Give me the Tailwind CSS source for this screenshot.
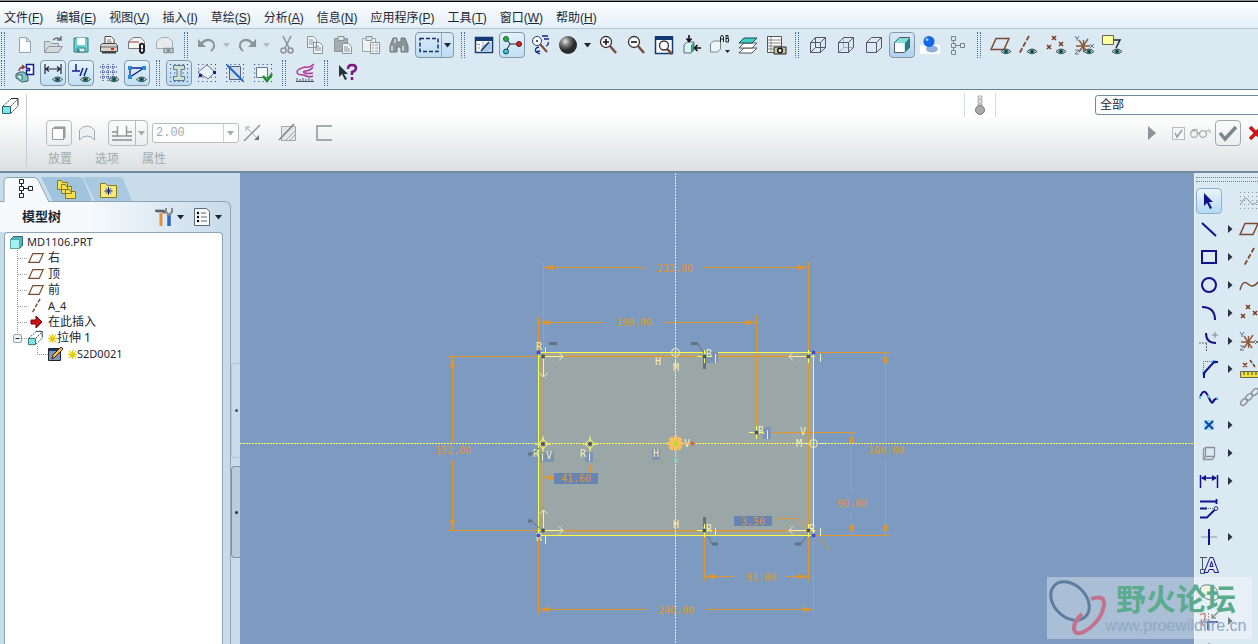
<!DOCTYPE html>
<html lang="zh-CN">
<head>
    <meta charset="UTF-8">
    <meta name="viewport" content="width=device-width, initial-scale=1.0">
    <title>MD1106.PRT</title>
    <script src="https://cdn.jsdelivr.net/npm/@tailwindcss/browser@4"></script>
</head>
<body class="flex h-screen flex-col overflow-hidden bg-[#dbe9f3] font-['Liberation_Sans','Noto_Sans_CJK_SC',sans-serif] text-xs text-[#1c2733]">
    <!-- Shared icons -->
    <svg class="hidden" fill="none">
        <symbol id="eye" viewBox="0 0 10 7"><path d="M0 3.5Q5-1.5 10 3.5Q5 8 0 3.5z" fill="#e8f0f0" stroke="#223" stroke-width=".8"/><circle cx="5" cy="3.5" r="2.6" fill="#2c7468"/><circle cx="5" cy="3.5" r="1" fill="#123"/></symbol>
        <symbol id="plane" viewBox="0 0 20 20"><path d="M6 4.5h13l-5 11H1z" fill="none" stroke="#7a4a32" stroke-width="1.5"/></symbol>
        <symbol id="axis" viewBox="0 0 20 20"><path d="M15 1L5 19" stroke="#7a4a32" stroke-width="1.8" stroke-dasharray="5 2"/></symbol>
        <symbol id="points" viewBox="0 0 20 20"><path d="M7 2l4 4m0-4L7 6M2 11l4 4m0-4l-4 4M14 8l4 4m0-4l-4 4" stroke="#7a3a22" stroke-width="1.5"/></symbol>
        <symbol id="csys" viewBox="0 0 20 20"><path d="M2 11h14M5 17l9-13M5 5l8 12M9.5 5v12" stroke="#8a5a3a" stroke-width="1.4"/><path d="M1 1l2 3 2-3M3 4v2M1 15h4l-4 4h4M16 9l4 4m0-4l-4 4" fill="none" stroke="#667788"/></symbol>
        <symbol id="tree" viewBox="0 0 16 20"><path d="M1.5 1.5h4v4h-4zM1.5 8.5h4v4h-4zM1.5 15.5h4v4h-4zM10.5 8.5h4v4h-4zM3.5 5.500V8M3.5 12v3M5.500 10.500h5" fill="none" stroke="currentColor"/></symbol>
        <symbol id="extrude" viewBox="0 0 18 18"><path d="M.5 9.500h8v7h-8z" fill="#7fe6e6" stroke="#2b6670"/><path d="M9 1.500h7v7" fill="none" stroke="#223"/><path d="M1 9l8-7M9 9l7-7M9 16l7-7" fill="none" stroke="#345" stroke-dasharray="2 1"/></symbol>
        <symbol id="caret" viewBox="0 0 8 5"><path d="M0 0h7L3.500 4.500z" fill="currentColor"/></symbol>
        <symbol id="flyout" viewBox="0 0 5 8"><path d="M0 0v8l4.500-4z" fill="#26323e"/></symbol>
        <symbol id="dots" viewBox="0 0 18 18"><path d="M1 1.500h17M1 5.500h17M1 9.500h17M1 13.500h17M1 17.500h17" fill="none" stroke="#1d3f9a" stroke-dasharray="1 3"/></symbol>
        <symbol id="star" viewBox="0 0 8 8"><path d="M4 0v8M0 4h8M1 1l6 6M7 1L1 7" stroke="#e0cc10" stroke-width="1.2"/></symbol>
    </svg>

    <!-- Menu bar -->
    <nav class="h-[29px] shrink-0 border-b border-[#b4c8d6] bg-gradient-to-b from-white to-[#e3eff7]">
        <div class="h-[2px] border-b border-black bg-[#8c969e]"></div>
        <div class="flex gap-[13px] pt-2 pl-1 leading-4 whitespace-nowrap">
            <a href="#">文件(<u>F</u>)</a>
            <a href="#">编辑(<u>E</u>)</a>
            <a href="#">视图(<u>V</u>)</a>
            <a href="#">插入(<u>I</u>)</a>
            <a href="#">草绘(<u>S</u>)</a>
            <a href="#">分析(<u>A</u>)</a>
            <a href="#">信息(<u>N</u>)</a>
            <a href="#">应用程序(<u>P</u>)</a>
            <a href="#">工具(<u>T</u>)</a>
            <a href="#">窗口(<u>W</u>)</a>
            <a href="#">帮助(<u>H</u>)</a>
        </div>
    </nav>

    <!-- Toolbars -->
    <div class="flex h-[61px] shrink-0 flex-col border-b border-[#6c8396] py-[2px] [&_button]:flex [&_button]:shrink-0 [&_button]:items-center [&_button]:justify-center [&_i]:mx-[5px] [&_i]:h-[26px] [&_i]:w-1 [&_i]:shrink-0 [&_i]:border-x [&_i]:border-dotted [&_i]:border-[#3f6a90] [&_svg]:overflow-visible">
        <div class="flex h-7 items-center pl-[11px] [&>button]:mx-px [&>button]:h-[26px] [&>button]:w-[26px]">
            <i class="-ml-[10px]! mr-[6px]!"></i>
            <button aria-label="新建"><svg class="size-5" viewBox="0 0 20 20"><path d="M4.500 2.500h7l4 4v11h-11zM11.500 2.500v4h4" fill="#fafcfd" stroke="#9aa3aa"/></svg></button>
            <button aria-label="打开"><svg class="size-5" viewBox="0 0 20 20"><path d="M1.500 17.500v-11h5l2 2h7v3M1.500 17.500l4-6h14l-4 6z" fill="#d4d9dc" stroke="#8f989e"/><path d="M10 5q4-4 8 0m0-4v4h-4" fill="none" stroke="#6a7378" stroke-width="1.5"/></svg></button>
            <button aria-label="保存"><svg class="size-5" viewBox="0 0 20 20"><path d="M3 3h14v14H3z" fill="#6cd0d0" stroke="#2a7f86"/><path d="M6 3h8v7H6z" fill="#fff"/><path d="M6 13h8v4H6z" fill="#d9eeee" stroke="#2a7f86"/><path d="M7.500 14v3" stroke="#2a7f86" stroke-width="2"/></svg></button>
            <button aria-label="打印"><svg class="size-5" viewBox="0 0 20 20"><path d="M6 9V1.500h6l3 3V9z" fill="#fff" stroke="#444"/><path d="M8 5h4M8 7h5" stroke="#777"/><path d="M1.500 10.500l2-2h13l2 2v6h-17z" fill="#d9d2c8" stroke="#444"/><path d="M2 12h16" stroke="#666"/><path d="M12 13h3v2h-3z" fill="#d22"/><path d="M3 17.500h14" stroke="#444" stroke-width="2"/></svg></button>
            <button aria-label="附加发送"><svg class="size-5" viewBox="0 0 20 20"><path d="M1.500 13.500v-7l5-4h7l4 4v7z" fill="#f4f4f0" stroke="#777"/><path d="M2 7h10" stroke="#a33"/><path d="M13 9.500q3-2 4 1v6q-2 3-4 0v-6z" fill="none" stroke="#111" stroke-width="1.8"/></svg></button>
            <button aria-label="链接发送"><svg class="size-5" viewBox="0 0 20 20"><path d="M1.500 13.500v-7l5-4h7l4 4v7z" fill="#e6eaec" stroke="#a5adb3"/><path d="M9 13.500h4v4H9zM14 13.500h4v4h-4zM11 15.500h5" fill="none" stroke="#8b949b" stroke-width="1.5"/></svg></button>
            <i></i>
            <button aria-label="撤消"><svg class="size-5" viewBox="0 0 20 20"><path d="M4 9q6-7 12-2 3 5-2 9" fill="none" stroke="#8b949b" stroke-width="2"/><path d="M1 4v8h8z" fill="#8b949b"/></svg></button>
            <svg class="mx-[2px] h-[5px] w-2 text-[#b4bdc5]"><use href="#caret"/></svg>
            <button aria-label="重做"><svg class="size-5" viewBox="0 0 20 20"><path d="M16 9q-6-7-12-2-3 5 2 9" fill="none" stroke="#8b949b" stroke-width="2"/><path d="M19 4v8h-8z" fill="#8b949b"/></svg></button>
            <svg class="mx-[2px] h-[5px] w-2 text-[#b4bdc5]"><use href="#caret"/></svg>
            <button aria-label="剪切"><svg class="size-5" viewBox="0 0 20 20"><path d="M6 1l6 12M14 1L8 13" stroke="#8b949b" stroke-width="1.6"/><circle cx="6.500" cy="15.500" r="2.500" fill="none" stroke="#8b949b" stroke-width="1.5"/><circle cx="13.500" cy="15.500" r="2.500" fill="none" stroke="#8b949b" stroke-width="1.5"/></svg></button>
            <button aria-label="复制"><svg class="size-5" viewBox="0 0 20 20"><path d="M2.500 1.500h6l3 3v8h-9zM8.500 7.500h6l3 3v8h-9z" fill="#f1f4f6" stroke="#8b949b"/><path d="M4 5h4M4 7h5M4 9h4M10 11h4M10 13h6M10 15h6" stroke="#8b949b"/></svg></button>
            <button aria-label="粘贴"><svg class="size-5" viewBox="0 0 20 20"><path d="M1.500 3.500h13v13h-13z" fill="#a5adb3" stroke="#8b949b"/><path d="M5 1.500h6v4H5z" fill="#dde2e5" stroke="#8b949b"/><path d="M9.500 8.500h6l3 3v7h-9z" fill="#f4f6f7" stroke="#8b949b"/><path d="M11 12h4M11 14h6M11 16h6" stroke="#8b949b"/></svg></button>
            <button aria-label="选择性粘贴"><svg class="size-5" viewBox="0 0 20 20"><path d="M1.500 3.500h13v13h-13z" fill="#eef1f3" stroke="#9aa3aa"/><path d="M5 1.500h6v4H5z" fill="#dde2e5" stroke="#8b949b"/><path d="M9.500 7.500h9v11h-9z" fill="#f4f6f7" stroke="#8b949b"/><path d="M11 10h2M11 13h2M11 16h2M14 10h3M14 13h3M14 16h3" stroke="#8b949b"/></svg></button>
            <button aria-label="查找"><svg class="size-5" viewBox="0 0 20 20"><path d="M4 3h4v4h4V3h4l3 8v6h-7v-5H8v5H1v-6z" fill="#8b949b" stroke="#6f787f"/><path d="M3 11v5M14 11v5M6 4v4" stroke="#dde2e5" stroke-width="1.5"/></svg></button>
            <div class="mx-[2px] flex h-[26px] rounded-sm border border-[#8398a8] bg-gradient-to-b from-[#dcecf7] to-[#bddcf2]">
                <button aria-label="选取框" class="w-[25px]"><svg class="h-4 w-5" viewBox="0 0 20 16"><path d="M1 1.500h18v13H1z" fill="none" stroke="#1a2b6a" stroke-width="1.5" stroke-dasharray="4 2"/></svg></button>
                <button aria-label="选取方式" class="w-3 border-l border-[#8fa8ba]"><svg class="h-[5px] w-2"><use href="#caret"/></svg></button>
            </div>
            <i></i>
            <button aria-label="重画"><svg class="size-5" viewBox="0 0 20 20"><path d="M1.500 2.500h17v15h-17z" fill="#fff" stroke="#123a72" stroke-width="1.5"/><path d="M1 2h18v4H1z" fill="#123a72"/><path d="M7 15l1-5 9-3v8l-6 2z" fill="#a9c8ea"/><path d="M7 16l8-9" stroke="#235" stroke-width="1.5"/><path d="M3 9l3 1M4 13h2M8 8h2" stroke="#888"/></svg></button>
            <button aria-label="旋转中心" aria-pressed="true" class="rounded-sm border border-[#8398a8] bg-gradient-to-b from-[#e6f2fa] to-[#bfdff5]"><svg class="size-5" viewBox="0 0 20 20"><path d="M4 3l4 6-4 7M8 9h9" fill="none" stroke="#223"/><circle cx="4" cy="4" r="2.500" fill="#2fae3a" stroke="#164"/><circle cx="17" cy="9" r="2.500" fill="#d6202c" stroke="#611"/><circle cx="4" cy="16.500" r="2.500" fill="#3fc7d8" stroke="#145"/></svg></button>
            <button aria-label="定向模式"><svg class="size-5" viewBox="0 0 20 20"><circle cx="7" cy="6" r="4.500" fill="#fff" stroke="#246"/><circle cx="7" cy="6" r="1" fill="#124"/><path d="M10 9l7 8" stroke="#7a4a3a" stroke-width="2"/><path d="M12 1h6M14 4h5M18 7q1 3-2 4M9 12q-5 1-3 5l4 2M6 17l4-1" fill="none" stroke="#12218c" stroke-width="1.3"/></svg></button>
            <button aria-label="外观库"><svg class="size-5" viewBox="0 0 20 20"><defs><radialGradient id="ball" cx=".35" cy=".3"><stop stop-color="#e8e8e8"/><stop offset=".5" stop-color="#777"/><stop offset="1" stop-color="#2a2a2a"/></radialGradient></defs><circle cx="10" cy="10" r="9" fill="url(#ball)"/></svg></button>
            <svg class="mx-[2px] h-[5px] w-2"><use href="#caret"/></svg>
            <button aria-label="放大"><svg class="size-5" viewBox="0 0 20 20"><path d="M12 11l6 7" stroke="#7a4a3a" stroke-width="2.500"/><circle cx="8" cy="7" r="5.500" fill="#fff" stroke="#333" stroke-width="1.3"/><path d="M5 7h6M8 4v6" stroke="#111" stroke-width="1.6"/></svg></button>
            <button aria-label="缩小"><svg class="size-5" viewBox="0 0 20 20"><path d="M12 11l6 7" stroke="#7a4a3a" stroke-width="2.500"/><circle cx="8" cy="7" r="5.500" fill="#fff" stroke="#333" stroke-width="1.3"/><path d="M5 7h6" stroke="#111" stroke-width="1.6"/></svg></button>
            <button aria-label="重新调整"><svg class="size-5" viewBox="0 0 20 20"><path d="M1.500 2.500h17v16h-17z" fill="#fff" stroke="#123a72" stroke-width="1.5"/><path d="M1 1h18v4H1z" fill="#123a72"/><path d="M13 14l5 5" stroke="#7a4a3a" stroke-width="2.500"/><circle cx="10" cy="10.500" r="4.500" fill="#fff" stroke="#333" stroke-width="1.3"/></svg></button>
            <button aria-label="重定向"><svg class="size-5" viewBox="0 0 20 20"><path d="M2 10l3-3h7v8l-3 3H2z" fill="#d7f3f0" stroke="#667"/><path d="M9 10l3-3v8l-3 3z" fill="#2aa38f"/><path d="M7 0v6M4.500 3.500L7 6.500l2.500-3M19 13h-6m2.500-3L12.500 13l3 3" fill="none" stroke="#111" stroke-width="1.6"/></svg></button>
            <button aria-label="已保存的视图"><svg class="size-5" viewBox="0 0 20 20"><path d="M.5 9l3-3h7v8l-3 3h-7z" fill="#eef6f8" stroke="#788"/><path d="M10.500 7V2l1.500-2 1.500 2v5M10.500 4h3M16 0v7h2.500V3.500H16M16 .5h2V3" fill="none" stroke="#222"/><path d="M15 15h5l-2.500 3z" fill="#222"/></svg></button>
            <button aria-label="层"><svg class="size-5" viewBox="0 0 20 20"><path d="M1 18l5-5h13l-5 5z" fill="#fff" stroke="#555"/><path d="M1 13l5-5h13l-5 5z" fill="#fff" stroke="#555"/><path d="M1 8l5-5h13l-5 5z" fill="#3fd0c4" stroke="#245"/></svg></button>
            <button aria-label="视图管理器"><svg class="size-5" viewBox="0 0 20 20"><path d="M1.500 1.500h14v16h-14z" fill="#fff" stroke="#555"/><path d="M5 2v15M2 5h13M2 8h13M2 11h13M2 14h13" stroke="#888"/><path d="M8 12h12v7H8z" fill="#c9c4a0" stroke="#222"/><circle cx="14" cy="15.500" r="2.300" fill="#fff" stroke="#111" stroke-width="1.5"/></svg></button>
            <i></i>
            <button aria-label="线框"><svg class="size-5" viewBox="0 0 20 20"><path d="M2.500 7.500h10v10h-10zM7.500 2.500h10v10h-10zM2.500 7.500l5-5M12.500 7.500l5-5M12.500 17.500l5-5M2.500 17.500l5-5" fill="none" stroke="#556"/></svg></button>
            <button aria-label="隐藏线"><svg class="size-5" viewBox="0 0 20 20"><path d="M7.500 3v9.500h10M2.500 17.500l5-5" fill="none" stroke="#a6b0b8"/><path d="M2.500 7.500h10v10h-10zM2.500 7.500l5-5h10v10l-5 5M12.500 7.500l5-5" fill="none" stroke="#556"/></svg></button>
            <button aria-label="消隐"><svg class="size-5" viewBox="0 0 20 20"><path d="M2.500 7.500h10v10h-10zM2.500 7.500l5-5h10v10l-5 5M12.500 7.500l5-5" fill="none" stroke="#556"/></svg></button>
            <button aria-label="着色" aria-pressed="true" class="rounded-sm border border-[#8398a8] bg-gradient-to-b from-[#d8e9f6] to-[#b0d3ee]"><svg class="size-5" viewBox="0 0 20 20"><path d="M2.500 7.500l5-5h10v10l-5 5h-10z" fill="#7fe0da" stroke="#556"/><path d="M3 8h9.500v9H3z" fill="#fff"/><path d="M13 8l4.500-5v9.500l-4.500 5z" fill="#2b7f84"/></svg></button>
            <button aria-label="增强的真实感"><svg class="size-5" viewBox="0 0 20 20"><path d="M0 10h20v9H0z" fill="#fff"/><ellipse cx="12" cy="14" rx="6" ry="3.500" fill="#8fb2dc"/><circle cx="9" cy="6.500" r="5.500" fill="#1268e8"/><circle cx="7" cy="4.500" r="1.500" fill="#9cf"/></svg></button>
            <button aria-label="模型树"><svg class="h-5 w-4 text-[#7b858d]"><use href="#tree"/></svg></button>
            <i></i>
            <button aria-label="基准平面显示"><svg class="size-5" viewBox="0 0 20 20"><use href="#plane" y="-1" width="20" height="20"/><use href="#eye" x="11" y="13" width="10" height="7"/></svg></button>
            <button aria-label="基准轴显示"><svg class="size-5" viewBox="0 0 20 20"><use href="#axis" x="-4" width="20" height="20"/><use href="#eye" x="9" y="13" width="10" height="7"/></svg></button>
            <button aria-label="基准点显示"><svg class="size-5" viewBox="0 0 20 20"><use href="#points" x="-1" y="-1" width="20" height="20"/><use href="#eye" x="10" y="13" width="10" height="7"/></svg></button>
            <button aria-label="坐标系显示"><svg class="size-5" viewBox="0 0 20 20"><use href="#csys" width="20" height="20"/><use href="#eye" x="10" y="13" width="10" height="7"/></svg></button>
            <button aria-label="注释显示"><svg class="size-5" viewBox="0 0 20 20"><path d="M.5.5h11v9H.5z" fill="#ffffa0" stroke="#665"/><path d="M12 5h6l-4 8" fill="none" stroke="#222" stroke-width="1.5"/><use href="#eye" x="10" y="13" width="10" height="7"/></svg></button>
        </div>
        <div class="flex h-7 items-center pl-[11px] [&>button]:mx-px [&>button]:h-[26px] [&>button]:w-[26px]">
            <i class="-ml-[10px]! mr-[6px]!"></i>
            <button aria-label="草绘方向"><svg class="size-5" viewBox="0 0 20 20"><path d="M1 11l4-2h4l4 4v5l-6 1-6-4z" fill="#7cc9c2" stroke="#456"/><path d="M2 12h5v5" fill="#eafaf8" stroke="#456"/><path d="M11.500 1.500h7v10h-7v-4h3v-2h-3z" fill="#fff" stroke="#12218c" stroke-width="1.5"/><path d="M4 8q0-4 5-4M7 2l2.500 2L7 6" fill="none" stroke="#833" stroke-width="1.3"/></svg></button>
            <button aria-label="尺寸显示" aria-pressed="true" class="rounded-sm border border-[#8398a8] bg-gradient-to-b from-[#e6f2fa] to-[#bfdff5]"><svg class="size-5" viewBox="0 0 20 20"><path d="M2 1v10M18 1v10M3 6h14M6 3.500L3 6l3 2.500M14 3.500L17 6l-3 2.500" fill="none" stroke="#223" stroke-width="1.2"/><use href="#eye" x="9" y="13" width="11" height="7"/></svg></button>
            <button aria-label="约束显示" aria-pressed="true" class="rounded-sm border border-[#8398a8] bg-gradient-to-b from-[#e6f2fa] to-[#bfdff5]"><svg class="size-5" viewBox="0 0 20 20"><path d="M1 8h8M5 1v7M9 13l3-8M13 13l3-8" stroke="#12218c" stroke-width="1.5"/><use href="#eye" x="9" y="13" width="11" height="7"/></svg></button>
            <button aria-label="网格显示"><svg class="size-5" viewBox="0 0 20 20"><path d="M4 1v17M9 1v17M14 1v17M1 4h17M1 9h17M1 14h17" stroke="#12218c" stroke-dasharray="1 1"/><use href="#eye" x="10" y="13" width="10" height="7"/></svg></button>
            <button aria-label="顶点显示" aria-pressed="true" class="rounded-sm border border-[#8398a8] bg-gradient-to-b from-[#e6f2fa] to-[#bfdff5]"><svg class="size-5" viewBox="0 0 20 20"><path d="M3 5h14L3 14z" fill="none" stroke="#12218c" stroke-width="1.3"/><path d="M1 3h4v4H1zM15 3h4v4h-4zM1 12h4v4H1z" fill="#2a8ad8"/><use href="#eye" x="9" y="13" width="11" height="7"/></svg></button>
            <i></i>
            <button aria-label="着色封闭环" aria-pressed="true" class="rounded-sm border border-[#8398a8] bg-gradient-to-b from-[#d8e9f6] to-[#b9dbf3]"><svg class="size-5" viewBox="0 0 20 20"><use href="#dots" width="19" height="19"/><path d="M4.500 2.500h11v4h-3.500v7h3.500v4h-11v-4h3.500v-7h-3.500z" fill="#cfe0d4" stroke="#678"/></svg></button>
            <button aria-label="加亮开放端"><svg class="size-5" viewBox="0 0 20 20"><use href="#dots" width="19" height="19"/><path d="M1 9l9-7 8 7-7 7z" fill="#e8f1f8" stroke="#778"/><path d="M2 11h3v3H2zM16 8h3v3h-3z" fill="#12218c"/></svg></button>
            <button aria-label="重叠几何"><svg class="size-5" viewBox="0 0 20 20"><use href="#dots" width="19" height="19"/><path d="M4.500 3.500h11v13h-11z" fill="#cfdce8" stroke="#567"/><path d="M2 2l16 16" stroke="#1866d0" stroke-width="2"/></svg></button>
            <button aria-label="特征要求"><svg class="size-5" viewBox="0 0 20 20"><use href="#dots" width="19" height="19"/><path d="M3.500 4.500h11v10h-11z" fill="#f4fbfa" stroke="#678"/><path d="M10 13l4 5 5-7" fill="none" stroke="#189028" stroke-width="2.500"/></svg></button>
            <i></i>
            <button aria-label="分析"><svg class="size-5" viewBox="0 0 20 20"><path d="M19 1q-4 4-9 3-8 2-8 5t7 3q5 3 9 1M18 4q-3 4-8 4-3 1 0 2t8 0" fill="none" stroke="#b03a9a" stroke-width="1.5"/><path d="M1 18.500h18M2 15v3M5 16v2M8 15v3M11 16v2M14 15v3M17 16v2" stroke="#556"/></svg></button>
            <i></i>
            <button aria-label="上下文帮助"><svg class="size-5" viewBox="0 0 20 20"><path d="M2 2v12l3-3 3 6 2-1-3-5h4z" fill="#26323e"/><path d="M11 6q0-4 4-4t4 3-4 4v3M15 14v3" fill="none" stroke="#7a1a80" stroke-width="2.500"/></svg></button>
        </div>
    </div>

    <!-- Feature dashboard -->
    <section class="flex h-[83px] shrink-0 overflow-hidden border-b-2 border-[#6f8ba0] bg-gradient-to-b from-white from-30% to-[#dce0e2] text-[#a2a9ae]">
        <div class="my-1 w-[27px] shrink-0 border-r border-[#c3ced6] pt-[3px] pl-[2px]">
            <svg class="size-[18px]"><use href="#extrude"/></svg>
        </div>
        <div class="flex min-w-0 flex-1 flex-col">
            <div class="flex h-[30px] items-center justify-end">
                <div class="mr-[99px] flex h-6 w-8 items-center justify-center border-x border-[#d5dadd]">
                    <svg class="h-5 w-3" viewBox="0 0 12 20"><path d="M4 1h4v3H4zM4 5h4v3H4zM4 9h4v3H4z" fill="#eee" stroke="#999" stroke-width=".8"/><circle cx="6" cy="15" r="4.500" fill="#aaa" stroke="#777"/></svg>
                </div>
                <select aria-label="过滤器" class="-mr-1 h-5 w-[167px] appearance-none rounded-[3px] border border-[#6f8ba0] bg-white px-1 text-xs leading-4 text-[#1c2733]"><option>全部</option></select>
            </div>
            <div class="flex h-[26px] items-center pl-[19px] [&_button]:flex [&_button]:shrink-0 [&_button]:items-center [&_button]:justify-center">
                <button aria-label="实体" class="size-[26px] rounded-sm border border-[#b6bcc0]"><svg class="size-5" viewBox="0 0 20 20"><path d="M3.500 5.500l2-2h11v11l-2 2h-11z" fill="#999"/><path d="M3.500 5.500h11v11h-11z" fill="#fff" stroke="#999"/></svg></button>
                <button aria-label="曲面" class="ml-[2px] size-[26px]"><svg class="size-5" viewBox="0 0 20 20"><path d="M2.500 17V7q3-4 7.500-4t7.500 4v10q-3-4-7.500-4t-7.500 4z" fill="#eef0f1" stroke="#a2a9ae"/></svg></button>
                <div class="ml-2 flex h-[26px] rounded-sm border border-[#b6bcc0]">
                    <button aria-label="深度选项" class="w-[26px]"><svg class="size-5" viewBox="0 0 20 20"><path d="M0 9h5M15 9h5M0 13h5M15 13h5M0 17h20" stroke="#888f94" stroke-width="1.5"/><path d="M5.500 3v10h9V3" fill="#fff" stroke="#999" stroke-width="1.5"/></svg></button>
                    <button aria-label="更多深度选项" class="w-3 border-l border-[#b6bcc0]"><svg class="h-[5px] w-2"><use href="#caret"/></svg></button>
                </div>
                <div class="ml-1 flex h-5 w-[87px] rounded-[3px] border border-[#b6bcc0] bg-white">
                    <input aria-label="深度值" value="2.00" class="w-[70px] pl-[3px] font-['Liberation_Mono',monospace] text-xs text-[#a2a9ae]">
                    <button aria-label="最近的值" class="flex-1 border-l border-[#ccd1d4]"><svg class="h-[5px] w-2"><use href="#caret"/></svg></button>
                </div>
                <button aria-label="反向" class="ml-[2px] size-[22px]"><svg class="size-5" viewBox="0 0 20 20"><path d="M2 18L18 2" stroke="#8b949b" stroke-width="1.5"/><path d="M4 4l12 12M4 8V4h4" fill="none" stroke="#aaa"/><path d="M17 17v-5l-5 5z" fill="#777"/></svg></button>
                <button aria-label="移除材料" class="ml-[14px] size-[22px]"><svg class="size-5" viewBox="0 0 20 20"><path d="M3.500 3.500h14v14h-14z" fill="#e4e6e8" stroke="#a2a9ae"/><path d="M8 17l9-9M12 17l5-5" stroke="#a2a9ae"/><path d="M1 17L16 1" stroke="#7b8388" stroke-width="1.5"/></svg></button>
                <button aria-label="加厚" class="ml-[14px] size-[22px]"><svg class="size-5" viewBox="0 0 20 20"><path d="M18 3H3v14h15" fill="none" stroke="#8b949b" stroke-width="1.5"/></svg></button>
                <div class="ml-auto flex items-center">
                    <button aria-label="继续"><svg class="h-[14px] w-2" viewBox="0 0 8 14"><path d="M0 0v14l8-7z" fill="#8b949b"/></svg></button>
                    <label class="ml-4 grid size-[13px] [&>*]:[grid-area:1/1]">
                        <input type="checkbox" checked aria-label="预览" class="peer size-[13px] appearance-none border border-[#b6bcc0] bg-[#f4f5f5]">
                        <svg class="invisible size-[13px] peer-checked:visible" viewBox="0 0 13 13"><path d="M3 6l2 4 5-7" fill="none" stroke="#999" stroke-width="1.5"/></svg>
                    </label>
                    <svg class="ml-1 h-4 w-[22px]" viewBox="0 0 22 16"><circle cx="5" cy="9" r="3.500" fill="none" stroke="#999"/><circle cx="14" cy="9" r="3.500" fill="none" stroke="#999"/><path d="M8 8h3M2 7q2-4 7-2M17 7q4-5 4 1" fill="none" stroke="#999"/></svg>
                    <button aria-label="确定" class="ml-1 size-[26px] rounded-sm border border-[#a2a9ae]"><svg class="size-5" viewBox="0 0 20 20"><path d="M2 10l5 6L18 4" fill="none" stroke="#7f878c" stroke-width="3.500"/></svg></button>
                    <button aria-label="取消" class="-mr-[5px] ml-2"><svg class="h-[14px] w-[14px]" viewBox="0 0 14 14"><path d="M1 1l12 12M13 1L1 13" stroke="#c4161c" stroke-width="3.500"/></svg></button>
                </div>
            </div>
            <div class="flex gap-[23px] pt-[5px] pl-[21px] leading-4">
                <button>放置</button>
                <button>选项</button>
                <button>属性</button>
            </div>
        </div>
    </section>

    <main class="flex min-h-0 flex-1">
        <!-- Navigator -->
        <aside class="flex w-60 shrink-0 bg-[#c9dcea]">
            <div class="flex min-w-0 flex-1 flex-col">
                <div class="flex h-7 items-end pl-1">
                    <button aria-label="模型树" class="z-10 flex h-6 w-11 items-center justify-center"><svg class="h-6 w-12 shrink-0 overflow-visible" viewBox="0 0 48 24"><path d="M2 25V4Q2 .5 6 .5h26q3 0 5 4L47 25" fill="#f6fafd" stroke="#8fa5b5"/><svg x="16" y="1" width="16" height="20" class="text-[#222]"><use href="#tree"/></svg></svg></button>
                    <button aria-label="文件夹浏览器" class="flex h-6 w-[42px] items-center justify-center"><svg class="h-6 w-12 shrink-0 overflow-visible" viewBox="0 0 48 24"><path d="M-4 0h38q3 0 5 4l8 20H8z" fill="#a0c4de"/><path d="M12.500 3.500h4l1 2h5v7h-10zM16.500 7.500h4l1 2h5v7h-10zM20.500 12.500h4l1 2h5v7h-10z" fill="#f3df52" stroke="#8a7a1c"/></svg></button>
                    <button aria-label="收藏夹" class="flex h-6 w-[42px] items-center justify-center"><svg class="h-6 w-12 shrink-0 overflow-visible" viewBox="0 0 48 24"><path d="M-4 0h36q3 0 5 4l8 20H8z" fill="#a9c9e0"/><path d="M13.500 6.500h5l2 2h9v12h-16z" fill="#f7ea7a" stroke="#8a7a1c"/><path d="M21.500 10v8M17.500 14h8M19 11.500l5 5M24 11.500l-5 5" stroke="#12218c"/></svg></button>
                </div>
                <div class="flex min-h-0 flex-1 flex-col rounded-tr-md border-t border-r border-[#8fa5b5] pr-[7px] pl-1">
                    <div class="-ml-1 flex h-[30px] items-center bg-gradient-to-r from-[#f6fafd] from-40% to-transparent pl-[22px]">
                        <h2 class="mr-auto text-[13px] font-bold">模型树</h2>
                        <button aria-label="设置" class="flex items-center gap-1"><svg class="h-5 w-[18px]" viewBox="0 0 18 20"><path d="M0 3h9l2 3H8v-1H1z" fill="#666" stroke="#444" stroke-width=".5"/><path d="M6 6v13" stroke="#e09040" stroke-width="3"/><path d="M14 8v11" stroke="#2b66c0" stroke-width="3.500"/><path d="M11 1v4l3 3 3-3V1" fill="none" stroke="#888" stroke-width="2"/></svg><svg class="h-[5px] w-2"><use href="#caret"/></svg></button>
                        <button aria-label="显示" class="ml-2 flex items-center gap-1"><svg class="h-5 w-[18px]" viewBox="0 0 18 20"><path d="M1.500 1.500h12l3 3v14h-15z" fill="#f8fafb" stroke="#567"/><circle cx="5" cy="6" r="1.2"/><circle cx="5" cy="10" r="1.2"/><circle cx="5" cy="14" r="1.2"/><path d="M8 6h5M8 10h6M8 14h6" stroke="#567"/></svg><svg class="h-[5px] w-2"><use href="#caret"/></svg></button>
                    </div>
                    <!-- Model tree -->
                    <ul class="min-h-0 flex-1 rounded-t-sm border border-b-0 border-[#8fa5b5] bg-white pt-px pl-[5px] font-['Noto_Sans','Noto_Sans_CJK_SC',sans-serif] text-xs leading-4 [&_li]:flex [&_li]:h-4 [&_li]:items-center [&_li]:whitespace-nowrap [&_svg]:shrink-0">
                        <li class="text-[11px]"><svg class="mr-1 size-[13px]" viewBox="0 0 13 13"><path d="M.5 3.500l3-3h9v9l-3 3h-9z" fill="#4fb8bc" stroke="#356a78"/><path d="M.5 3.500h9v9h-9z" fill="#a5f0f0" stroke="#5aa"/></svg>MD1106.PRT</li>
                        <li><svg class="h-4 w-[18px]" viewBox="0 0 18 16"><path d="M7.500 0v16M8 8.500h10" stroke="#999" stroke-dasharray="1 1"/></svg><svg class="mr-1 size-4"><use href="#plane"/></svg>右</li>
                        <li><svg class="h-4 w-[18px]" viewBox="0 0 18 16"><path d="M7.500 0v16M8 8.500h10" stroke="#999" stroke-dasharray="1 1"/></svg><svg class="mr-1 size-4"><use href="#plane"/></svg>顶</li>
                        <li><svg class="h-4 w-[18px]" viewBox="0 0 18 16"><path d="M7.500 0v16M8 8.500h10" stroke="#999" stroke-dasharray="1 1"/></svg><svg class="mr-1 size-4"><use href="#plane"/></svg>前</li>
                        <li class="text-[11px]"><svg class="h-4 w-[18px]" viewBox="0 0 18 16"><path d="M7.500 0v16M8 8.500h10" stroke="#999" stroke-dasharray="1 1"/></svg><svg class="mr-1 size-4"><use href="#axis"/></svg>A_4</li>
                        <li><svg class="h-4 w-[18px]" viewBox="0 0 18 16"><path d="M7.500 0v16M8 8.500h10" stroke="#999" stroke-dasharray="1 1"/></svg><svg class="mr-1 size-4" viewBox="0 0 16 16"><path d="M3 6h5V2l6 6-6 6v-4H3z" fill="#d01018" stroke="#700"/></svg>在此插入</li>
                        <li><svg class="h-4 w-[18px]" viewBox="0 0 18 16"><path d="M7.500 0v4M12 8.500h6" stroke="#999" stroke-dasharray="1 1"/><rect x="3.500" y="4.500" width="8" height="8" rx="1.5" fill="#eef4f8" stroke="#8fa5b5"/><path d="M5.500 8.500h4" stroke="#223"/></svg><svg class="mr-1 size-4"><use href="#extrude"/></svg><svg class="size-[9px]"><use href="#star"/></svg>拉伸 1</li>
                        <li class="text-[11px]"><svg class="h-4 w-[38px]" viewBox="0 0 38 16"><path d="M27.500 0v8.500H38" fill="none" stroke="#999" stroke-dasharray="1 1"/></svg><svg class="mr-1 size-4" viewBox="0 0 16 16"><path d="M.5 2.500h12v12H.5z" fill="#7f95b8" stroke="#223"/><path d="M1 3h12v2H1z" fill="#123a72"/><path d="M4 13l1-4 8-8 2 2-8 8z" fill="#f2c94c" stroke="#420"/></svg><svg class="size-[9px]"><use href="#star"/></svg>S2D0021</li>
                    </ul>
                </div>
            </div>
            <div class="flex w-[9px] flex-col gap-2 pt-[190px]">
                <button aria-label="折叠浏览器" class="flex h-[95px] items-center justify-center rounded-l border border-r-0 border-[#b3c6d4]"><span class="size-[3px] rounded-full bg-[#456]"></span></button>
                <button aria-label="折叠导航器" class="flex h-[92px] items-center justify-center rounded-l border border-r-0 border-[#7f95a5] bg-[#b8ccda]"><span class="size-[3px] rounded-full bg-[#234]"></span></button>
            </div>
        </aside>

        <!-- Sketch -->
        <div class="relative min-w-0 flex-1 overflow-hidden bg-[#7d9bc0]">
            <svg class="absolute inset-0 size-full" viewBox="240 173 954 471" preserveAspectRatio="xMinYMin slice" fill="none">
                <defs>
                    <marker id="tip" viewBox="0 0 10 6" refX="10" refY="3" markerWidth="10" markerHeight="6" markerUnits="userSpaceOnUse" orient="auto"><path d="M0 .5L10 3L0 5.500z" fill="#e0962c"/></marker>
                    <symbol id="vertex" viewBox="0 0 16 16" overflow="visible"><path d="M8 0v16M0 8h16" stroke="#ffff5a"/><path d="M3 8l5-5 5 5-5 5z" stroke="#f0f080"/><circle cx="8" cy="8" r="2" fill="#4a5560"/></symbol>
                </defs>
                <rect x="538" y="352" width="276" height="184" fill="#9ba6a6"/>
                <!-- extension lines -->
                <g stroke="#e0962c" shape-rendering="crispEdges">
                    <path d="M543.500 262v268M808.500 262v319M538.500 317v35M756.500 315v117M448 356.500h360M448 530.500h360M813 352.500h77M813 535.500h77M770 432.500h86M704.500 530v51M538.500 535v79M813.500 535v79M590.500 465v12"/>
                    <path d="M543 355.500h265M543 531.500h265M542.500 356v174M809.500 356v174" stroke="#b8a46c"/>
                </g>
                <path d="M820 538l10 13M776 518.500h21l11 11" stroke="#e0962c"/>
                <!-- dimension lines -->
                <g stroke="#e0962c" shape-rendering="crispEdges" class="[&_path]:[marker-end:url(#tip)]">
                    <path d="M646 267.500H543"/>
                    <path d="M704 267.500H808"/>
                    <path d="M603 322.500H539"/>
                    <path d="M664 322.500H756"/>
                    <path d="M452.500 442V357"/>
                    <path d="M452.500 460V530"/>
                    <path d="M885.500 442V353"/>
                    <path d="M885.500 460V535"/>
                    <path d="M851.500 492V433"/>
                    <path d="M851.500 512V535"/>
                    <path d="M734 576.500H705"/>
                    <path d="M786 576.500H808"/>
                    <path d="M648 609.500H539"/>
                    <path d="M706 609.500H813"/>
                    <path d="M553 477.500H543"/>
                </g>
                <g shape-rendering="crispEdges">
                    <path d="M538.500 352.500h275v183h-275z" stroke="#ffff46"/>
                    <path d="M675.500 173v1000M240 443.500h2400" stroke="#ffff50" stroke-dasharray="2 1"/>
                </g>
                <path d="M554 473h44v11h-44zM734 516h38v10h-38z" fill="#6685b4"/>
                <path d="M652 449h8v11h-8zM585 452h8v10h-8zM540 452h14v10h-14zM706 352h12v11h-12zM763 427h8v12h-8z" fill="#7b93b4"/>
                <!-- dimension values -->
                <g fill="#e0962c" text-anchor="middle" class="font-['DejaVu_Sans_Mono',monospace] text-[10px]">
                    <text x="675" y="272">232.00</text>
                    <text x="634" y="326">190.00</text>
                    <text x="453" y="454">152.00</text>
                    <text x="886" y="454">160.00</text>
                    <text x="852" y="507">90.00</text>
                    <text x="761" y="581">91.00</text>
                    <text x="676" y="614">240.00</text>
                    <text x="576" y="482">41.60</text>
                    <text x="753" y="525">3.50</text>
                </g>
                <!-- constraint labels -->
                <g fill="#f4efb4" text-anchor="middle" class="font-['DejaVu_Sans_Mono',monospace] text-[10px]">
                    <text x="539" y="350">R</text>
                    <text x="658" y="365">H</text>
                    <text x="676" y="371">M</text>
                    <text x="709" y="357">R</text>
                    <text x="761" y="434">R</text>
                    <text x="803" y="435">V</text>
                    <text x="799" y="447">M</text>
                    <text x="536" y="457">R</text>
                    <text x="549" y="459">V</text>
                    <text x="583" y="457">R</text>
                    <text x="656" y="457">H</text>
                    <text x="687" y="447">V</text>
                    <text x="676" y="528">H</text>
                    <text x="709" y="532">R</text>
                    <text x="812" y="532">R</text>
                    <text x="539" y="541">R</text>
                </g>
                <path d="M545.500 347v6M715.500 354v9M820.500 354v8M767.500 430v9M542.500 453v8M589.500 453v8M715.500 528v7M820.500 528v8M545.500 536v8" stroke="#f4efb4"/>
                <!-- tangency hints -->
                <path d="M549 343.500h8M691 343.500h7M528 454h4M528 521h4M712 544h6M795 544h6M704.500 358v11M704.500 517v10" stroke="#67727c" stroke-width="3"/>
                <path d="M698 344l6 9M532 454l7-6M532 521l7 7M708 536l4 8M806 536l-5 8" stroke="#67727c"/>
                <path d="M545 356.500h18l-4-4m4 4l-4 4M543.500 358v19l-4-4m4 4l4-4M806 356.500h-17l4-4m-4 4l4 4M545 530.500h18l-4-4m4 4l-4 4M543.500 528v-18l-4 4m4-4l4 4M806 530.500h-17l4-4m-4 4l4 4" stroke="#f4efb4"/>
                <use href="#vertex" x="535" y="436" width="16" height="16"/>
                <use href="#vertex" x="582" y="436" width="16" height="16"/>
                <path d="M704.500 350v13M697 356.500h14M756.500 426v13M749 432.500h14M704.500 524v13M697 530.500h14M808.500 350v13M803 356.500h12M808.500 524v13M803 530.500h12M538 356.500h11M538 530.500h11" stroke="#ffff5a"/>
                <g fill="#4a5560"><circle cx="704.500" cy="356.500" r="2"/><circle cx="756.500" cy="432.500" r="2"/><circle cx="704.500" cy="530.500" r="2"/><circle cx="543" cy="356.500" r="2"/><circle cx="543" cy="530.500" r="2"/><circle cx="808.500" cy="356.500" r="2"/><circle cx="808.500" cy="530.500" r="2"/></g>
                <g fill="#4848c8"><circle cx="538.500" cy="352.500" r="2"/><circle cx="813.500" cy="352.500" r="2"/><circle cx="538.500" cy="535.500" r="2"/><circle cx="813.500" cy="535.500" r="2"/></g>
                <circle cx="675.500" cy="352.500" r="4" stroke="#f4efb4"/>
                <circle cx="813.500" cy="443.500" r="4" stroke="#f4efb4"/>
                <path d="M675.500 359v7M820 443.500h5M803 443.500h5" stroke="#f4efb4"/>
                <!-- origin -->
                <path d="M675.500 436v15M668 443.500h15M670 438l11 11M681 438l-11 11" stroke="#f8c05c" stroke-width="4"/>
                <path d="M683 443.500h8" stroke="#f8c05c"/>
                <circle cx="676" cy="443.500" r="2" fill="#a8e020"/>
                <circle cx="692.500" cy="443.500" r="2" fill="#e0603c"/>
                <circle cx="676" cy="460" r="2" fill="#7fd8b0"/>
            </svg>
        </div>

        <!-- Sketcher tools -->
        <div class="w-16 shrink-0 overflow-hidden border-l border-[#e8f2f8] bg-[#dbe9f3] pt-1 pl-px">
            <div class="h-[5px] border-y border-dotted border-[#5f86a8]"></div>
            <div class="mt-[5px] grid grid-cols-[28px_12px_28px] auto-rows-[28px] items-center [&_button]:flex [&_button]:size-[26px] [&_button]:items-center [&_button]:justify-center [&>svg]:mx-auto [&>svg]:h-2 [&>svg]:w-[5px]">
                <button aria-label="选取" aria-pressed="true" class="rounded-sm border border-[#8fb0c8] bg-gradient-to-b from-[#eaf5fc] to-[#b4daf4]"><svg class="size-5" viewBox="0 0 20 20"><path d="M5 2v13l3-3 3 6 2-1-3-6h4z" fill="#12128c"/></svg></button>
                <span></span>
                <button aria-label="草绘"><svg class="size-5 overflow-visible text-[#8b949b]" viewBox="0 0 20 20"><path d="M1 1.500h18M1 5.500h18M1 9.500h18M1 13.500h18M1 17.500h18" stroke="#8b949b" stroke-dasharray="1 3"/><path d="M2 13q4-10 8-3t10-1" fill="none" stroke="#8b949b"/></svg></button>

                <button aria-label="线"><svg class="size-5" viewBox="0 0 20 20"><path d="M3 4l14 13" stroke="#12128c" stroke-width="2"/></svg></button>
                <svg><use href="#flyout"/></svg>
                <button aria-label="基准平面"><svg class="size-5"><use href="#plane"/></svg></button>

                <button aria-label="矩形"><svg class="size-5" viewBox="0 0 20 20"><path d="M3 4h14v12H3z" fill="none" stroke="#12128c" stroke-width="2"/></svg></button>
                <svg><use href="#flyout"/></svg>
                <button aria-label="基准轴"><svg class="size-5"><use href="#axis"/></svg></button>

                <button aria-label="圆"><svg class="size-5" viewBox="0 0 20 20"><circle cx="10" cy="10" r="7" fill="none" stroke="#12128c" stroke-width="2"/></svg></button>
                <svg><use href="#flyout"/></svg>
                <button aria-label="基准曲线"><svg class="size-5" viewBox="0 0 20 20"><path d="M1 15q3-11 8-6t11-3" fill="none" stroke="#7a4a32" stroke-width="1.5"/></svg></button>

                <button aria-label="弧"><svg class="size-5" viewBox="0 0 20 20"><path d="M3 4q13 0 13 13" fill="none" stroke="#12128c" stroke-width="2"/></svg></button>
                <svg><use href="#flyout"/></svg>
                <button aria-label="基准点"><svg class="size-5"><use href="#points"/></svg></button>

                <button aria-label="圆角"><svg class="size-5" viewBox="0 0 20 20"><path d="M7 2q0 10 10 10" fill="none" stroke="#12128c" stroke-width="2"/><path d="M0 12h8M7.500 12v8" stroke="#666" stroke-dasharray="2 1"/><path d="M13 4h6M16 1v6" stroke="#888"/></svg></button>
                <svg><use href="#flyout"/></svg>
                <button aria-label="坐标系"><svg class="size-5"><use href="#csys"/></svg></button>

                <button aria-label="倒角"><svg class="size-5" viewBox="0 0 20 20"><path d="M4.500 13V2.500H15" fill="none" stroke="#666" stroke-dasharray="1 1"/><path d="M3 12h4v4H3zM13 1h4v4h-4z" fill="#7fc8f0"/><path d="M5 19v-5L15 3h4" fill="none" stroke="#12128c" stroke-width="2"/></svg></button>
                <svg><use href="#flyout"/></svg>
                <button aria-label="参照尺寸"><svg class="size-5" viewBox="0 0 20 20"><path d="M4 4l4 4m0-4L4 8M11 1l2 3M14 5l2 3" stroke="#7a3a22" stroke-width="1.5"/><path d="M1.500 12.500h18v6h-18z" fill="#f0e040" stroke="#665"/><path d="M5 13v3M9 13v3M13 13v3M17 13v3" stroke="#443"/></svg></button>

                <button aria-label="样条"><svg class="size-5" viewBox="0 0 20 20"><path d="M1 10Q5 0 9 9t5 6 5-4" fill="none" stroke="#12128c" stroke-width="2"/><path d="M1 9v3M9 8l1 3M18 10v2" stroke="#5fc0f0" stroke-width="2"/></svg></button>
                <span></span>
                <button aria-label="链"><svg class="size-5" viewBox="0 0 20 20"><ellipse cx="5" cy="15" rx="4" ry="2.500" transform="rotate(-45 5 15)" fill="none" stroke="#8b949b" stroke-width="1.5"/><ellipse cx="10" cy="10" rx="4" ry="2.500" transform="rotate(-45 10 10)" fill="none" stroke="#8b949b" stroke-width="1.5"/><ellipse cx="16" cy="5" rx="4" ry="2.500" transform="rotate(-45 16 5)" fill="none" stroke="#8b949b" stroke-width="1.5"/></svg></button>

                <button aria-label="点"><svg class="size-5" viewBox="0 0 20 20"><path d="M5 5h10v10H5z" fill="#9fdcf8"/><path d="M6 6l8 8M14 6l-8 8" stroke="#12409c" stroke-width="2"/></svg></button>
                <svg><use href="#flyout"/></svg>
                <span></span>

                <button aria-label="使用边"><svg class="size-5" viewBox="0 0 20 20"><path d="M6.500 4.500h9v9h-9zM4.500 6.500v10h9M4.500 6.500l2-2M4.500 16.500l2-3M13.500 16.500l2-3" fill="none" stroke="#8b949b" stroke-width="1.3"/></svg></button>
                <svg><use href="#flyout"/></svg>
                <span></span>

                <button aria-label="尺寸"><svg class="size-5" viewBox="0 0 20 20"><path d="M1.500 4v13M18.500 4v13M3 7h14" stroke="#12128c" stroke-width="1.5"/><path d="M2 7l5-3v6zM18 7l-5-3v6z" fill="#12128c"/></svg></button>
                <svg><use href="#flyout"/></svg>
                <span></span>

                <button aria-label="修改"><svg class="size-5" viewBox="0 0 20 20"><path d="M1 2.500h17M17.500 0v5M1 9.500h7M1 18.500h7l8-8" fill="none" stroke="#12128c" stroke-width="1.8"/><path d="M9 9.500h6" stroke="#666" stroke-dasharray="1 1"/><circle cx="17" cy="9.500" r="1.8" fill="#fff" stroke="#12128c"/></svg></button>
                <span></span>
                <span></span>

                <button aria-label="约束"><svg class="size-5" viewBox="0 0 20 20"><path d="M2 10h16" stroke="#8b949b"/><path d="M10 2v16" stroke="#12128c" stroke-width="2"/></svg></button>
                <svg><use href="#flyout"/></svg>
                <span></span>

                <button aria-label="文本"><svg class="size-5" viewBox="0 0 20 20"><path d="M1 2.500h7M3.500 3v12M1.500 14.500h4v4h-4z" fill="none" stroke="#456"/><path d="M5 17.500L11 2.500h3l5.500 15h-4l-1-3h-4.500l-1 3zM11 11.500h3l-1.500-5z" fill="#e4e4f0" stroke="#12128c"/></svg></button>
                <span></span>
                <span></span>

                <button aria-label="调色板"><svg class="size-5" viewBox="0 0 20 20"><path d="M1 7q1-6 9-5t9 9-8 6q-9-2-10-10z" fill="#e9f0d8" stroke="#24306c"/><circle cx="13.500" cy="9" r="2" fill="#9c6" stroke="#264"/></svg></button>
                <span></span>
                <span></span>

                <button aria-label="修剪"><svg class="size-5" viewBox="0 0 20 20"><path d="M1 4q6-4 5 2t-3 5 2 4" fill="none" stroke="#b0442c" stroke-width="1.5"/><path d="M9 19v-8h10" fill="none" stroke="#12128c" stroke-width="2"/><path d="M0 11h8M9.500 2v8" stroke="#666" stroke-dasharray="2 1"/><path d="M19 1l-6 6m0-4v4h4" fill="none" stroke="#555" stroke-width="1.5"/></svg></button>
                <svg><use href="#flyout"/></svg>
                <span></span>

                <button aria-label="镜像"><svg class="size-5" viewBox="0 0 20 20"><path d="M10 4v12M8 7L3 16h5zM12 7l5 9h-5z" fill="#cdd" stroke="#777"/></svg></button>
            </div>
        </div>
    </main>

    <!-- Forum watermark -->
    <div class="pointer-events-none absolute right-[6px] bottom-[5px] flex h-[62px] w-[205px] bg-white/35">
        <svg class="h-[62px] w-[62px] shrink-0" viewBox="0 0 62 62" fill="none">
            <ellipse cx="23" cy="24" rx="16" ry="22" transform="rotate(-45 23 24)" stroke="#5d7d9f" stroke-width="3"/>
            <path d="M44 22q14-5 13 6-2 13-13 22-11 9-16 5-4-7 7-18" stroke="#c2728f" stroke-width="4"/>
        </svg>
        <div class="-ml-1 flex flex-1 flex-col whitespace-nowrap">
            <span class="pl-[11px] font-['Noto_Sans_CJK_SC',sans-serif] text-[30px] leading-[40px] font-bold text-[#5bab8f]">野火论坛</span>
            <span class="text-[16px] leading-[18px] text-[#8fa9c4]">www.proewildfire.cn</span>
        </div>
    </div>
</body>
</html>
